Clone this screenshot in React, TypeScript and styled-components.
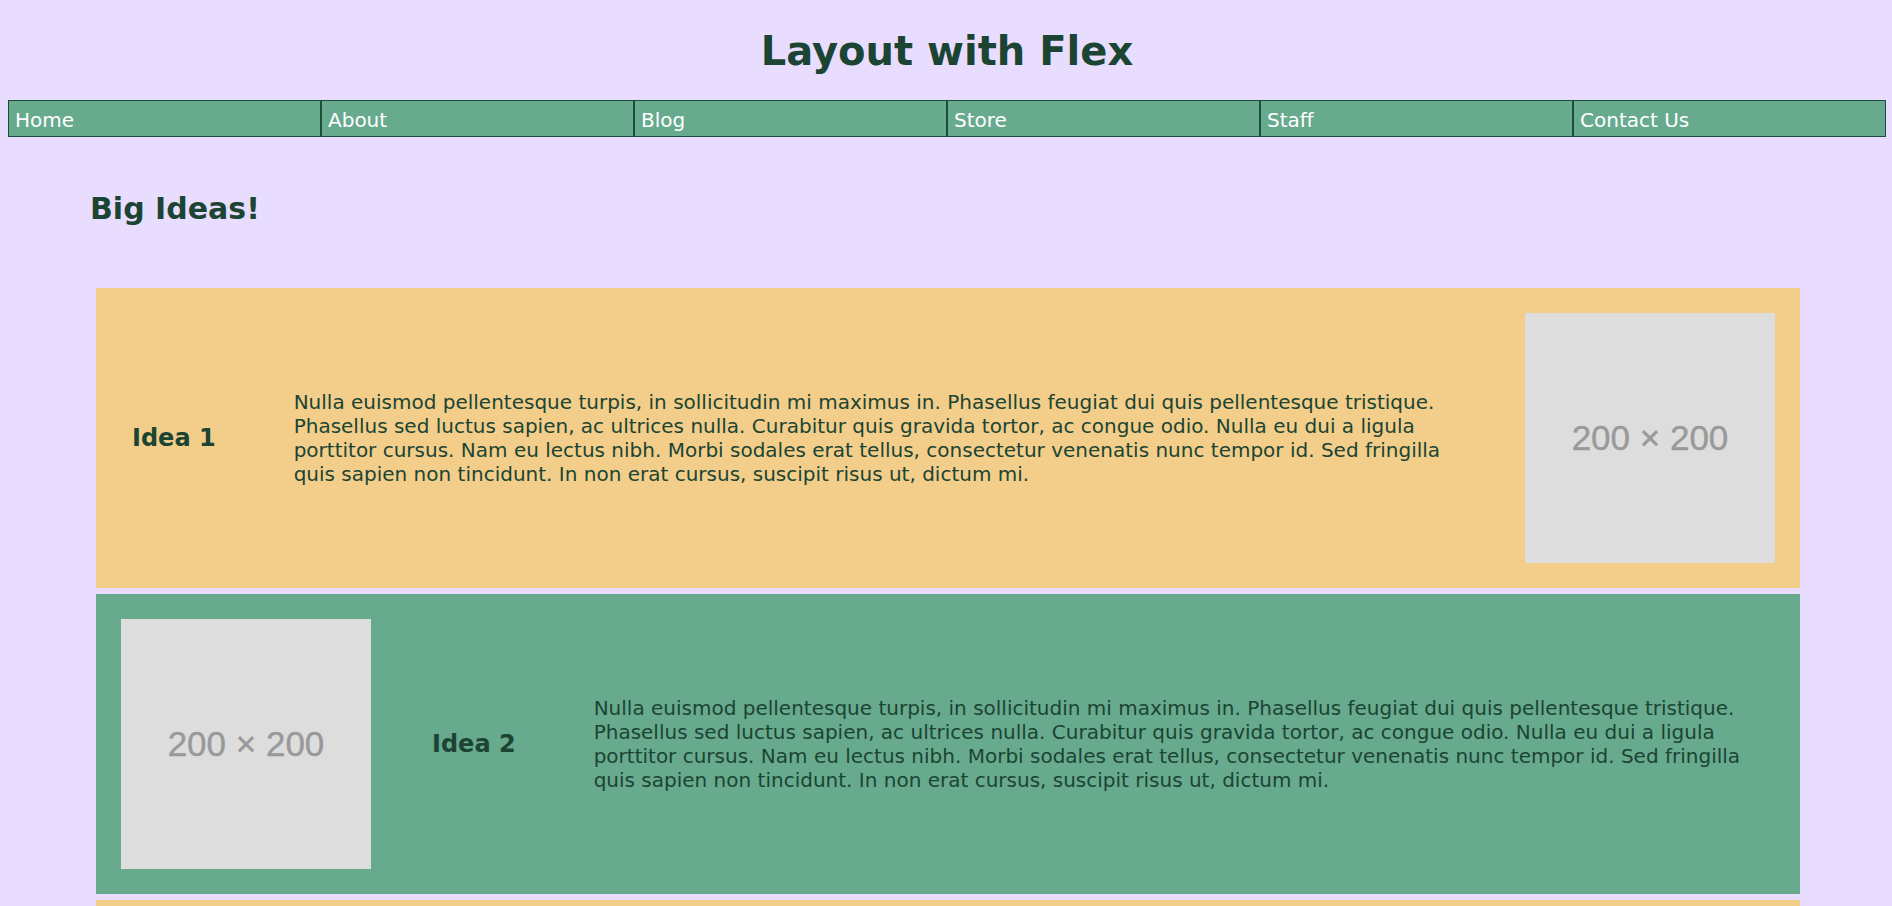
import React from "react";
import styled, { createGlobalStyle } from "styled-components";

const GlobalStyle = createGlobalStyle`
  html {
    scrollbar-width: none;
  }
  html::-webkit-scrollbar {
    display: none;
  }
  body {
    margin: 0;
    background: #e8ddff;
    color: #1c4433;
    font-family: "DejaVu Sans", Verdana, sans-serif;
    font-size: 20px;
    line-height: 1.2;
  }
`;

const links = ["Home", "About", "Blog", "Store", "Staff", "Contact Us"];

const text =
  "Nulla euismod pellentesque turpis, in sollicitudin mi maximus in. Phasellus feugiat dui quis pellentesque tristique. Phasellus sed luctus sapien, ac ultrices nulla. Curabitur quis gravida tortor, ac congue odio. Nulla eu dui a ligula porttitor cursus. Nam eu lectus nibh. Morbi sodales erat tellus, consectetur venenatis nunc tempor id. Sed fringilla quis sapien non tincidunt. In non erat cursus, suscipit risus ut, dictum mi.";

const ideas = [
  { title: "Idea 1", tone: "orange", imageFirst: false },
  { title: "Idea 2", tone: "green", imageFirst: true },
  { title: "Idea 3", tone: "orange", imageFirst: false },
];

const App = () => {
  return (
    <>
      <GlobalStyle />
      <Page>
        <Title>Layout with Flex</Title>
        <Nav>
          {links.map((link) => (
            <NavItem key={link}>{link}</NavItem>
          ))}
        </Nav>
        <Main>
          <Heading>Big Ideas!</Heading>
          <Ideas>
            {ideas.map((idea) => (
              <Idea key={idea.title} $tone={idea.tone}>
                {idea.imageFirst && <Placeholder>200 × 200</Placeholder>}
                <IdeaTitle>{idea.title}</IdeaTitle>
                <IdeaText>{text}</IdeaText>
                {!idea.imageFirst && <Placeholder>200 × 200</Placeholder>}
              </Idea>
            ))}
          </Ideas>
        </Main>
      </Page>
    </>
  );
};

export default App;

const Page = styled.div`
  padding: 0 6px 0 8px;
`;

const Title = styled.h1`
  margin: 0;
  padding: 27px 0 25px;
  font-size: 40px;
  line-height: 48px;
  text-align: center;
`;

const Nav = styled.ul`
  display: flex;
  margin: 0;
  padding: 0;
  list-style: none;
`;

const NavItem = styled.li`
  flex: 1;
  background: #67aa8e;
  border: 1px solid #1b4d3c;
  color: #ffffff;
  padding: 7px 5px 4px 6px;
  line-height: 24px;
`;

const Main = styled.main`
  padding: 54px 86px 0 82px;
`;

const Heading = styled.h2`
  margin: 0 0 61px;
  font-size: 30px;
  line-height: 36px;
`;

const Ideas = styled.div`
  display: flex;
  flex-direction: column;
  gap: 6px;
  margin-left: 6px;
`;

const Idea = styled.section<{ $tone: string }>`
  display: flex;
  align-items: center;
  gap: 50px;
  padding: 25px;
  background: ${(p) => (p.$tone === "green" ? "#67aa8e" : "#f2ce8a")};
`;

const IdeaTitle = styled.h3`
  flex-shrink: 0;
  margin: 0;
  padding: 0 10px 0 11px;
  font-size: 24px;
  line-height: 28px;
`;

const IdeaText = styled.p`
  flex: 1;
  margin: 0;
  padding: 0 18px;
  line-height: 24px;
`;

const Placeholder = styled.div`
  display: flex;
  flex-shrink: 0;
  align-items: center;
  justify-content: center;
  width: 250px;
  height: 250px;
  background: #dddddd;
  color: #999999;
  font-family: "Liberation Sans", Arial, sans-serif;
  font-size: 35px;
  -webkit-text-stroke: 0.4px #999999;
`;
